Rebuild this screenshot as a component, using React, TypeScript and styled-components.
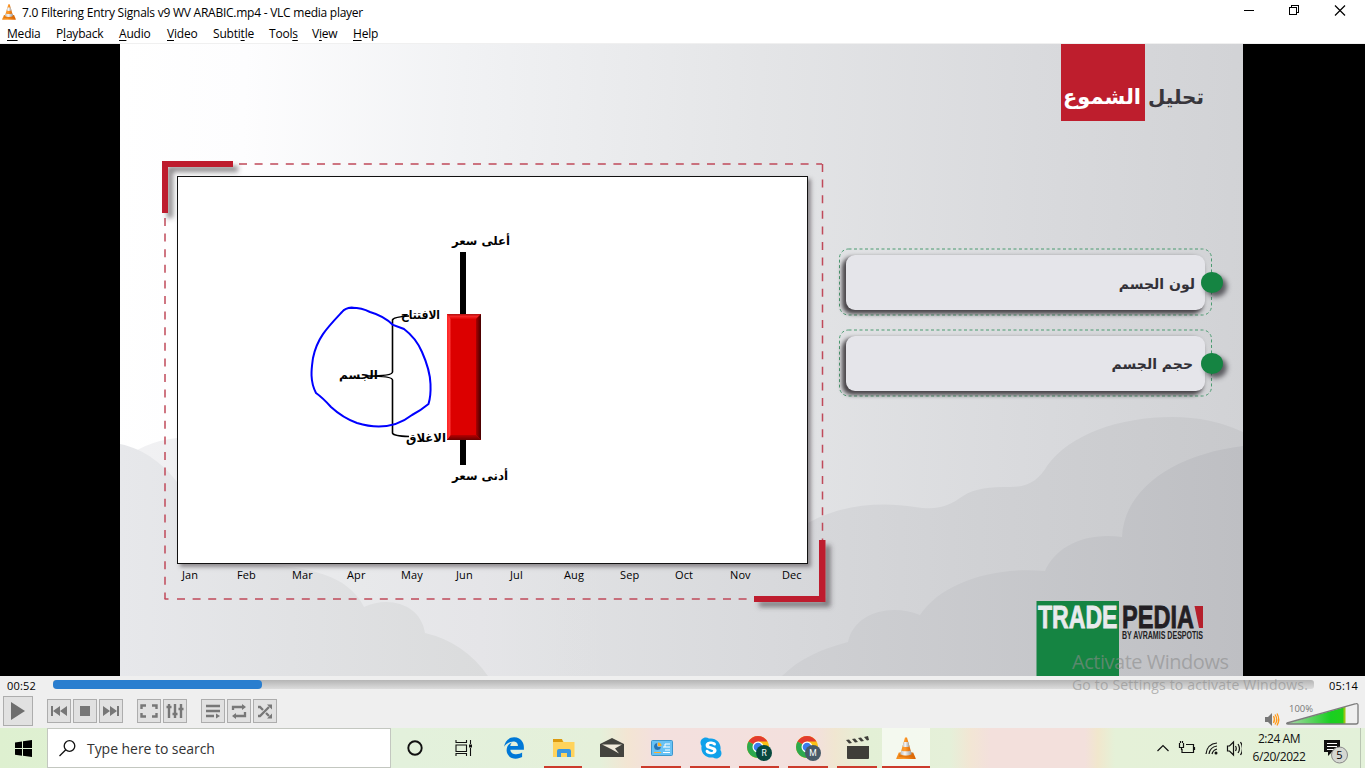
import React from 'react';
import styled, { createGlobalStyle } from 'styled-components';
import { FaSkype } from 'react-icons/fa6';
import { FaEdgeLegacy } from 'react-icons/fa';

const Global = createGlobalStyle`
  * { box-sizing: border-box; }
  body { margin: 0; overflow: hidden; font-family: "Open Sans", "Noto Sans", sans-serif; color: #000; }
  svg { display: block; flex: none; }
`;

const Window = styled.div`
  width: 1365px; height: 768px; display: flex; flex-direction: column; position: relative; overflow: hidden; background: #fff;
`;
const TitleBar = styled.header`
  height: 24px; display: flex; align-items: center; padding-left: 2px; gap: 6px; font-size: 12px;
`;
const Title = styled.span`letter-spacing: -0.245px; flex: 1; white-space: nowrap;`;
const MenuBar = styled.nav`
  height: 20px; display: flex; align-items: center; border-bottom: 1px solid #f0f0f0; font-size: 12px;
`;
const MenuItem = styled.span<{ $w: number }>`
  width: ${p => p.$w}px; white-space: nowrap; letter-spacing: -0.2px; flex: none;
  &:first-child { margin-left: 7px; }
  u { text-underline-offset: 2px; text-decoration-thickness: 1px; }
`;
const Video = styled.main`height: 632px; background: #000; display: flex; padding-left: 120px;`;
const Slide = styled.section`
  width: 1123px; height: 632px; position: relative; display: flex; overflow: hidden;
  background: linear-gradient(92deg, #fff 0%, #fdfdfe 11%, #f1f2f4 30%, #e4e5e7 56%, #d9dadd 80%, #d1d2d5 100%);
`;
const Layer = styled.svg`position: absolute; left: 0; top: 0;`;
const ChartColumn = styled.div`
  position: relative; width: 630px; margin: 132px 0 0 57px; flex: none; display: flex; flex-direction: column;
`;
const ChartBox = styled.div`
  height: 388px; width: 631px; background: #fff; border: 1px solid #111; box-shadow: 3px 3px 4px rgba(60,50,55,.5);
`;
const Months = styled.div`
  height: 20px; display: flex; align-items: center; font-size: 11px; font-family: "Open Sans", sans-serif; padding-left: 5px;
`;
const Month = styled.span<{ $w: number }>`width: ${p => p.$w}px; flex: none; letter-spacing: 0.1px;`;
const Side = styled.div`position: relative; flex: 1; display: flex; flex-direction: column; padding-left: 32px;`;
const Heading = styled.h1`
  margin: 0 39px 0 0; height: 77px; direction: rtl; display: flex; font: bold 21px "DejaVu Sans", sans-serif; color: #38363c; line-height: 106px;
`;
const HeadWord = styled.span`width: 59px; white-space: nowrap; font-size: 20px;`;
const HeadMark = styled.span`background: #be1e2d; color: #fff; width: 84px; padding-right: 4px; white-space: nowrap;`;
const Cards = styled.div`margin-top: 127px; display: flex; flex-direction: column; gap: 14px;`;
const Card = styled.div`width: 374px; height: 67px; position: relative; padding: 7px 8px 6px 7px;`;
const CardFace = styled.div<{ $pad: number; $line: number }>`
  position: relative; height: 55px; border-radius: 9px; background: #e5e5ea; box-shadow: -3px 3px 4px 1px rgba(35,30,35,.8);
  direction: rtl; padding-right: ${p => p.$pad}px; font: bold 14px "DejaVu Sans", sans-serif; line-height: ${p => p.$line}px; color: #333138;
`;
const Dot = styled.i`
  position: absolute; right: -10px; top: 24px; width: 22px; height: 21px; border-radius: 50%; background: #158442; box-shadow: 4px 4px 5px rgba(40,40,45,.7);
`;
const Logo = styled.div`
  margin: auto 0 0 197px; display: flex; height: 75px;
  svg { overflow: visible; }
`;

const Player = styled.footer`height: 52px; background: #efefef; display: flex; flex-direction: column; position: relative;`;
const SeekRow = styled.div`height: 18px; display: flex; align-items: center; padding: 1px 7px 0 7px; font-size: 11px;`;
const Time = styled.span<{ $r?: boolean }>`width: 44px; white-space: nowrap; text-align: ${p => (p.$r ? 'right' : 'left')}; letter-spacing: 0.2px;`;
const Track = styled.div`
  width: 1262px; height: 9px; border-radius: 3px; background: linear-gradient(#b5b5b5, #dcdcdc); margin: -2px 0 0 2px;
`;
const Played = styled.div`height: 100%; border-radius: 4px; background: #2a7ecf;`;
const Buttons = styled.div`height: 34px; display: flex; align-items: center; padding: 0 7px 0 3px;`;
const Btn = styled.button<{ $s?: number; $ml?: number }>`
  width: ${p => p.$s ?? 24}px; height: ${p => p.$s ?? 24}px; margin: 0 0 0 ${p => p.$ml ?? 2}px; padding: 0; flex: none;
  border: 1px solid #adadad; background: #e1e1e1; display: flex; align-items: center; justify-content: center;
`;
const Volume = styled.svg`margin: 5px -1px 0 auto;`;

const Taskbar = styled.footer`
  height: 40px; display: flex; align-items: stretch; position: relative;
  background: linear-gradient(90deg, #def0d0 0, #e3f1dc 400px, #e5f0da 600px, #f3e5d3 628px, #f3e0de 655px, #f3e0dd 815px, #f0e6d1 835px, #e3f0d6 870px, #e5f0d9 950px, #f2e6d4 970px, #f3e0dc 990px, #f3e0dc 1085px, #f1e7cd 1098px, #e5f1d8 1115px, #e3f1d9 1365px);
`;
const Start = styled.div`width: 47px; display: flex; align-items: center; justify-content: center;`;
const Search = styled.div`
  width: 344px; background: #fff; border: 1px solid #c3c7c0; display: flex; align-items: center; gap: 11px; padding-left: 11px;
  font-size: 14px; color: #333; letter-spacing: -0.05px; white-space: nowrap;
`;
const Task = styled.div<{ $open?: boolean; $active?: boolean; $w?: number }>`
  width: ${p => p.$w ?? 49}px; flex: none; display: flex; align-items: center; justify-content: center; position: relative;
  background: ${p => (p.$active ? 'rgba(255,255,255,.6)' : 'none')};
  &::after {
    content: ''; display: ${p => (p.$open ? 'block' : 'none')}; position: absolute; bottom: 0; height: 2px; background: #cc3b2c;
    left: ${p => (p.$active ? 0 : 4)}px; right: ${p => (p.$active ? 0 : 5)}px;
  }
`;
const Tray = styled.div`margin-left: auto; display: flex; align-items: center; padding-right: 4px; margin-right: 4px; border-right: 1px solid #b9c4b2;`;
const Clock = styled.div`
  width: 64px; margin-left: 5px; text-align: center; font-size: 12px; line-height: 18px; letter-spacing: -0.45px; color: #111; white-space: nowrap;
`;
const Notices = styled.svg`margin: 3px 6px 0 11px;`;
const Watermark = styled.div`
  position: absolute; left: 1072px; top: 649px; color: rgba(140,140,140,.6); white-space: nowrap; pointer-events: none;
`;
const MarkTitle = styled.div`font-size: 20px; line-height: 26px; letter-spacing: -0.48px;`;
const MarkText = styled.div`font-size: 14px; line-height: 20px; letter-spacing: 0.19px;`;

const Cone = ({ size = 20 }: { size?: number }) => (
  <svg width={size} height={size * 1.12} viewBox="0 0 20 23">
    <defs>
      <linearGradient id="cone" x1="0" x2="1"><stop offset="0" stopColor="#f08a1c" /><stop offset=".4" stopColor="#ff9b2b" /><stop offset="1" stopColor="#d65f00" /></linearGradient>
      <linearGradient id="band" x1="0" x2="1"><stop offset="0" stopColor="#bbb" /><stop offset=".4" stopColor="#f6f6f6" /><stop offset="1" stopColor="#999" /></linearGradient>
    </defs>
    <path d="M2.600 16h14.800L20 22.200q0 .8-1 .8H1q-1 0-1-.8z" fill="url(#cone)" />
    <path d="M3.500 17h13l1 3.200q-7.500 2-15 0z" fill="#d96800" opacity=".6" />
    <path d="M9 .5h2L16 18q-6 2.600-12 0z" fill="url(#cone)" />
    <path d="M7.700 5.200h4.600l1.300 4.500q-3.600 1.400-7.200 0z" fill="url(#band)" />
    <path d="M5.200 13.800q4.800 1.800 9.600 0l1.100 3.800q-5.900 2.600-11.800 0z" fill="url(#band)" />
  </svg>
);

const Chrome = ({ letter, color }: { letter: string; color: string }) => (
  <svg width="25" height="26" viewBox="1 0 25 26">
    <circle cx="12" cy="12" r="11" fill="#fbc116" />
    <path d="M12 12L2.500 6.500A11 11 0 0 1 21.500 6.500H12z" fill="#e33b2e" />
    <path d="M2.500 6.500A11 11 0 0 0 12 23l5-8.500-5-2.500z" fill="#2da94f" />
    <circle cx="12" cy="12" r="5.500" fill="#fff" />
    <circle cx="12" cy="12" r="4.300" fill="#3b7ded" />
    <circle cx="18" cy="18" r="8" fill={color} />
    <text x="18" y="21" fontSize="8.500" fontFamily="Roboto, sans-serif" fill="#fff" textAnchor="middle">{letter}</text>
  </svg>
);

const Clouds = () => (
  <Layer width="1123" height="632" viewBox="120 44 1123 632">
    <defs>
      <linearGradient id="cl1" gradientUnits="userSpaceOnUse" x1="120" x2="600" y1="0" y2="0"><stop offset="0" stopColor="#f2f2f4" /><stop offset=".5" stopColor="#e8e9eb" /><stop offset=".75" stopColor="#e5e5e8" /><stop offset="1" stopColor="#e1e2e4" stopOpacity="0" /></linearGradient>
      <linearGradient id="cl2" gradientUnits="userSpaceOnUse" x1="120" x2="490" y1="0" y2="0"><stop offset="0" stopColor="#e7e8eb" /><stop offset="1" stopColor="#dadbdc" /></linearGradient>
      <linearGradient id="cl3" gradientUnits="userSpaceOnUse" x1="300" x2="1243" y1="0" y2="0"><stop offset="0" stopColor="#e8e9eb" stopOpacity="0" /><stop offset=".22" stopColor="#e2e3e5" /><stop offset=".5" stopColor="#d8d9dc" /><stop offset=".72" stopColor="#d0d1d4" /><stop offset="1" stopColor="#c8c9cc" /></linearGradient>
      <linearGradient id="cl4" gradientUnits="userSpaceOnUse" x1="780" x2="1243" y1="0" y2="0"><stop offset="0" stopColor="#d0d1d4" /><stop offset="1" stopColor="#bebfc3" /></linearGradient>
    </defs>
    <path d="M300 676V550H700C730 550 760 548 808 523C840 505 880 501 915 507C939 511 950 505 963 496C975 488 990 487 1010 487C1030 487 1039 479 1047 466C1070 434 1120 417 1172 417Q1211 417 1243 432V676z" fill="url(#cl3)" />
    <path d="M120 463Q141 442 177 438V540H600V676H120z" fill="url(#cl1)" />
    <path d="M120 444C145 449 165 466 177 482L240 564C300 565 347 572 364 607C390 595 421 605 425 633Q464 642 488 676H120z" fill="url(#cl2)" />
    <path d="M782 676C800 658 822 649 848 642C854 613 890 603 920 615C940 584 992 566 1045 571C1055 548 1083 532 1122 537C1124 488 1176 454 1243 446V676z" fill="url(#cl4)" />
  </Layer>
);

const Frame = () => (
  <Layer width="1123" height="632" viewBox="120 44 1123 632">
    <defs><filter id="soft" x="-20%" y="-20%" width="150%" height="150%"><feDropShadow dx="5" dy="5" stdDeviation="2.500" floodColor="#403a40" floodOpacity=".6" /></filter></defs>
    <g stroke="#c04a5a" strokeWidth="1.500" fill="none" strokeDasharray="8 7.600">
      <path d="M239 164H822" /><path d="M165 218V599" /><path d="M822.500 164V540" /><path d="M177 599H755" /><path d="M164.500 599h4" />
    </g>
    <g fill="#be1e2d" filter="url(#soft)">
      <path d="M162 161H233V167H168V213H162z" /><path d="M819 540H825.500V602H754V596H819z" />
    </g>
  </Layer>
);

const Candle = () => (
  <svg width="629" height="386" viewBox="178 177 629 386" fontFamily="DejaVu Sans, sans-serif" fontWeight="bold" fontSize="12">
    <defs>
      <linearGradient id="edgeL"><stop offset="0" stopColor="#f22" /><stop offset=".7" stopColor="#ff3a3a" /><stop offset="1" stopColor="#e00808" /></linearGradient>
      <linearGradient id="edgeR"><stop offset="0" stopColor="#a00" /><stop offset="1" stopColor="#400" /></linearGradient>
      <linearGradient id="edgeT" x2="0" y2="1"><stop offset="0" stopColor="#b01010" /><stop offset=".5" stopColor="#f42525" /><stop offset="1" stopColor="#e00505" /></linearGradient>
      <linearGradient id="edgeB" x2="0" y2="1"><stop offset="0" stopColor="#b80000" /><stop offset="1" stopColor="#600" /></linearGradient>
    </defs>
    <path d="M463 252V465" stroke="#000" strokeWidth="6" />
    <path d="M447 314h34v126h-34z" fill="#dc0000" />
    <path d="M447 314h34l-5 5h-25z" fill="url(#edgeT)" />
    <path d="M447 314l4 5v116l-4 5z" fill="url(#edgeL)" />
    <path d="M481 314v126l-5-5V319z" fill="url(#edgeR)" />
    <path d="M447 440l4-5h25l5 5z" fill="url(#edgeB)" />
    <path d="M409 316Q393 317 392.500 320V372Q392.500 376 368 376Q392.500 376 392.500 380V433Q393 436 409 436.500" fill="none" stroke="#000" strokeWidth="1.600" />
    <path d="M348 308Q360 307 370 312Q384 316 393 325L404 329Q416 338 422 352Q430 370 430.500 384Q431 396 428.500 404Q420 411 412 415C398 426 380 430 357 423Q343 418 331 407Q323 398 316 393C309 380 312 366 313 358C317 338 327 328 342 312Q346 307 354 308" fill="none" stroke="#00f" strokeWidth="2" />
    <text x="452" y="245" textLength="58" lengthAdjust="spacingAndGlyphs">أعلى سعر</text>
    <text x="401" y="319" textLength="39" lengthAdjust="spacingAndGlyphs">الافتتاح</text>
    <text x="339" y="379" textLength="39" lengthAdjust="spacingAndGlyphs">الجسم</text>
    <text x="406" y="442" textLength="40" lengthAdjust="spacingAndGlyphs">الاغلاق</text>
    <text x="452" y="480" textLength="56" lengthAdjust="spacingAndGlyphs">أدنى سعر</text>
  </svg>
);

const LogoArt = () => (
  <svg width="170" height="75" viewBox="0 0 170 75" fontFamily="Liberation Sans, sans-serif" fontWeight="bold">
    <rect x=".5" width="82.500" height="75" fill="#158442" />
    <text x="2" y="27" fontSize="31" fill="#e8eaec" stroke="#e8eaec" strokeWidth=".8" textLength="79.500" lengthAdjust="spacingAndGlyphs">TRADE</text>
    <text x="86" y="27" fontSize="31" fill="#231f24" stroke="#231f24" strokeWidth=".8" textLength="72" lengthAdjust="spacingAndGlyphs">PEDIA</text>
    <path d="M158.500 5h8.500v22h-4z" fill="#b5202c" />
    <text x="86" y="38" fontSize="10" fill="#231f24" textLength="81" lengthAdjust="spacingAndGlyphs">BY AVRAMIS DESPOTIS</text>
  </svg>
);

const menus: [string, string, string, number][] = [
  ['', 'M', 'edia', 49], ['P', 'l', 'ayback', 63], ['', 'A', 'udio', 48], ['', 'V', 'ideo', 46],
  ['Subti', 't', 'le', 56], ['Tool', 's', '', 43], ['V', 'i', 'ew', 41], ['', 'H', 'elp', 40],
];
const months: [string, number][] = [['Jan', 55], ['Feb', 55], ['Mar', 55], ['Apr', 54], ['May', 55], ['Jun', 54], ['Jul', 54], ['Aug', 56], ['Sep', 55], ['Oct', 55], ['Nov', 52], ['Dec', 24]];
const cards: [string, number, number][] = [['لون الجسم', 10, 58], ['حجم الجسم', 12, 56]];

export default function App() {
  return (
    <Window>
      <Global />
      <TitleBar>
        <Cone size={14} />
        <Title>7.0 Filtering Entry Signals v9 WV ARABIC.mp4 - VLC media player</Title>
        <svg width="121" height="24" viewBox="1244 0 121 24" fill="none" stroke="#000" shapeRendering="crispEdges">
          <path d="M1244 10.500h10M1289.500 7.500h7v7h-7zM1291.500 7V5.500h7v7H1297" />
          <path d="M1335 5.500l10 10M1345 5.500l-10 10" strokeWidth="1.200" shapeRendering="auto" />
        </svg>
      </TitleBar>
      <MenuBar>
        {menus.map(([a, b, c, w]) => <MenuItem key={a + b + c} $w={w}>{a}<u>{b}</u>{c}</MenuItem>)}
      </MenuBar>
      <Video>
        <Slide>
          <Clouds />
          <Frame />
          <ChartColumn>
            <ChartBox><Candle /></ChartBox>
            <Months>{months.map(([m, w]) => <Month key={m} $w={w}>{m}</Month>)}</Months>
          </ChartColumn>
          <Side>
            <Heading><HeadWord>تحليل</HeadWord><HeadMark>الشموع</HeadMark></Heading>
            <Cards>
              {cards.map(([label, pad, line]) => (
                <Card key={label}>
                  <Layer width="374" height="68"><rect x=".5" y="1" width="372" height="66" rx="9" fill="none" stroke="#4b9b70" strokeDasharray="3 2.500" /></Layer>
                  <CardFace $pad={pad} $line={line}>{label}</CardFace>
                  <Dot />
                </Card>
              ))}
            </Cards>
            <Logo><LogoArt /></Logo>
          </Side>
        </Slide>
      </Video>
      <Player>
        <SeekRow>
          <Time>00:52</Time>
          <Track><Played style={{ width: `${(209 / 1262) * 100}%` }} /></Track>
          <Time $r>05:14</Time>
        </SeekRow>
        <Buttons>
          <Btn $s={30} $ml={0}><svg width="14" height="18"><path d="M0 0l14 9-14 9z" fill="#6e6e6e" /></svg></Btn>
          <Btn $ml={14}><svg width="16" height="12" fill="#777"><path d="M0 1h2v10H0zM2 6l7-5v10zM9 6l7-5v10z" /></svg></Btn>
          <Btn><svg width="10" height="10"><path d="M0 0h10v10H0z" fill="#777" /></svg></Btn>
          <Btn><svg width="16" height="12" fill="#777"><path d="M14 1h2v10h-2zM14 6L7 1v10zM7 6L0 1v10z" /></svg></Btn>
          <Btn $ml={14}><svg width="18" height="14" fill="none" stroke="#777" strokeWidth="2.400"><path d="M1.500 5V1.500H6M12 1.500h4.500V5M16.500 9v3.500H12M6 12.500H1.500V9" /></svg></Btn>
          <Btn><svg width="18" height="14" fill="none" stroke="#777" strokeWidth="2.400"><path d="M3 0v14M9 0v14M15 0v14M.5 3h5M6.500 10h5M12.500 5h5" /></svg></Btn>
          <Btn $ml={14}><svg width="16" height="15" fill="none" stroke="#777" strokeWidth="2.300"><path d="M1 2h14M1 7h14M1 12h8" /><path d="M11 9.500v5l4-2.500z" fill="#777" stroke="none" /></svg></Btn>
          <Btn><svg width="16" height="15" fill="none" stroke="#777" strokeWidth="2.300"><path d="M2 6V3h10M14 8v4H4" /><path d="M11 0l4 3-4 3zM5 9l-4 3 4 3z" fill="#777" stroke="none" /></svg></Btn>
          <Btn><svg width="16" height="15" fill="none" stroke="#777" strokeWidth="2.300"><path d="M1 12h2L12 3M1 3h2l3 3M9 9l3 3" /><path d="M10 .5h5v5zM10 14.500h5v-5z" fill="#777" stroke="none" /></svg></Btn>
          <Volume width="94" height="26" viewBox="1265 701 94 26">
            <defs><linearGradient id="vol"><stop offset="0" stopColor="#a9d8a9" /><stop offset=".75" stopColor="#19cf22" /><stop offset="1" stopColor="#22cf18" /></linearGradient></defs>
            <path d="M1265 717h3l4-4v13l-4-4h-3z" fill="#777" />
            <path d="M1273.500 716q2 3.500 0 7M1275 714.500q3.500 5 0 10M1277 713.500q3.500 6 0 12" fill="none" stroke="#ff9a1a" strokeWidth="1.300" />
            <path d="M1288 723L1345 707v17h-57z" fill="url(#vol)" /><path d="M1344.500 707v17" stroke="#9ac414" strokeWidth="2" />
            <path d="M1287 723L1355 704q3-1 3 1v17q0 2-2 2h-68q-2 0-1-1z" fill="none" stroke="#7c7c7c" strokeWidth="1.300" />
            <text x="1289" y="711.500" fontSize="9.500" fill="#777" textLength="24" lengthAdjust="spacingAndGlyphs">100%</text>
          </Volume>
        </Buttons>
      </Player>
      <Taskbar>
        <Start><svg width="17" height="17" viewBox="0 0 17 17"><path d="M0 2.400l7-1v6.700H0zM8 1.200L17 0v8.100H8zM0 9h7v6.700l-7-1zM8 9h9v8l-9-1.200z" /></svg></Start>
        <Search>
          <svg width="17" height="17" fill="none" stroke="#111" strokeWidth="1.300"><circle cx="10.500" cy="6" r="5.300" /><path d="M6.800 9.800L.5 16" /></svg>
          Type here to search
        </Search>
        <Task $w={48}><svg width="16" height="16"><circle cx="8" cy="8" r="6.700" fill="none" stroke="#111" strokeWidth="1.900" /></svg></Task>
        <Task $w={48}>
          <svg width="17" height="16" fill="none" stroke="#111" strokeWidth="1.100"><path d="M1 0v2.500h10.500V0M1 5h10.500v6.500H1zM1 16v-2.500h10.500V16M15.500 0v4M15.500 8v8" /><path d="M14 4.500h3v3h-3z" fill="#111" stroke="none" /></svg>
        </Task>
        <Task $w={53}><FaEdgeLegacy size={22} color="#0078d7" /></Task>
        <Task $open $w={47}>
          <svg width="22" height="19"><path d="M0 1h9l2 2h10.500v15H0z" fill="#ffd35c" /><path d="M0 0h9l1 3H0z" fill="#dc9a0e" /><path d="M4 18v-6q0-2 2-2h10q2 0 2 2v6h-4v-4H8v4z" fill="#3a97e0" /></svg>
        </Task>
        <Task $w={50}>
          <svg width="24" height="20"><path d="M0 6l12-6 12 6v13H0z" fill="#44443f" /><path d="M2 6.500h20l-7 4 4 5-8-4.500z" fill="#f0eadb" /></svg>
        </Task>
        <Task $open>
          <svg width="22" height="16"><rect x=".5" y=".5" width="21" height="15" rx="1" fill="#68c2f5" stroke="#3d96cc" /><circle cx="6.500" cy="6.500" r="3.300" fill="#fff" /><path d="M6.500 6.500V3A3.500 3.500 0 1 0 10 6.500z" fill="#2574b5" /><path d="M7 6V2.500A3.500 3.500 0 0 1 10.500 6z" fill="#ffad20" /><path d="M12 7h2v-3h5M14 7h5M14 10h5" stroke="#fff" fill="none" /><path d="M3 12.500h7" stroke="#ffb02e" /><path d="M12 12.500h7" stroke="#fff" /></svg>
        </Task>
        <Task $open>
          <svg width="24" height="24"><circle cx="12" cy="12" r="8" fill="#fff" /><FaSkype size={24} color="#10a1ea" /></svg>
        </Task>
        <Task $open><Chrome letter="R" color="#07493f" /></Task>
        <Task $open><Chrome letter="M" color="#485a68" /></Task>
        <Task $open>
          <svg width="24" height="24" fill="#3f3e39"><path d="M1 10h22v12q0 1-1 1H2q-1 0-1-1z" /><path d="M0 4l3-.5 3 3.500-3 .5zM6 3l3-.5 3 3.500-3 .5zM12 2l3-.5 3 3.500-3 .5zM18 1l4-1 1 4-2 .5z" /></svg>
        </Task>
        <Task $open $active $w={48}><Cone size={20} /></Task>
        <Tray>
          <svg width="86" height="20" viewBox="1157 738 86 20" fill="none" stroke="#111" strokeWidth="1.200">
            <path d="M1158.500 751l5.500-5.500 5.500 5.500" />
            <path d="M1187 744.500h7.500v8h-11.500v-3.500M1195.500 747v3" /><path d="M1180.500 743v4.500h4V743M1181.500 741v2M1183.500 741v2M1182.500 748v2" />
            <path d="M1207 754q1-10 11-11M1210 754q1-7 8-8M1213 754q1-4 5-5" /><circle cx="1217" cy="753" r="1.500" fill="#111" stroke="none" />
            <path d="M1228.500 746h2l4-4v13l-4-4h-2zM1236.500 746q1.500 2.500 0 5M1239 744q3 4.500 0 9M1241.500 742q4 6.500 0 13" />
          </svg>
          <Clock>2:24 AM<br />6/20/2022</Clock>
          <Notices width="28" height="28" viewBox="1322 736 28 28">
            <path d="M1324 740h16v12h-8l-4 4v-4h-4z" fill="#111" /><path d="M1327 743.500h10M1327 746.500h10M1327 749.500h7" stroke="#fff" />
            <circle cx="1339.500" cy="755" r="8" fill="#d5d8d2" stroke="#888" />
            <text x="1339.500" y="759" fontSize="11" textAnchor="middle">5</text>
          </Notices>
        </Tray>
      </Taskbar>
      <Watermark><MarkTitle>Activate Windows</MarkTitle><MarkText>Go to Settings to activate Windows.</MarkText></Watermark>
    </Window>
  );
}
